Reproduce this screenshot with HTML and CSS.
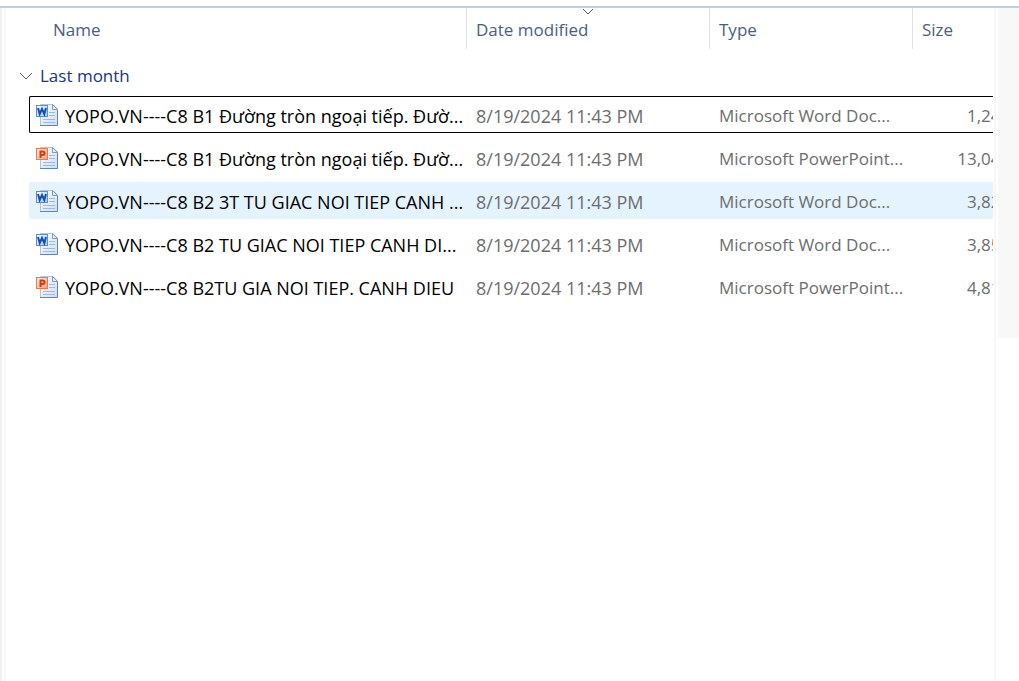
FILE: index.html
```html
<!DOCTYPE html>
<html lang="en">
<head>
<meta charset="utf-8">
<title>File list</title>
<link rel="stylesheet" href="styles.css">
</head>
<body>
<svg class="defs" aria-hidden="true">
  <defs>
    <linearGradient id="page" x1="0" y1="0" x2="1" y2="1">
      <stop offset="0" stop-color="#ffffff"/>
      <stop offset="1" stop-color="#cddcf5"/>
    </linearGradient>
    <linearGradient id="blue" x1="0" y1="0" x2="1" y2="1">
      <stop offset="0" stop-color="#ffffff"/>
      <stop offset="1" stop-color="#9cc8f2"/>
    </linearGradient>
    <linearGradient id="orange" x1="0" y1="0" x2="1" y2="1">
      <stop offset="0" stop-color="#fff0e8"/>
      <stop offset="1" stop-color="#f8a080"/>
    </linearGradient>
    <symbol id="sheet" viewBox="0 0 24 24">
      <path d="M5.500 1.500H18L22.500 6V22.500H5.500Z" fill="url(#page)" stroke="#b3c4de"/>
      <path d="M5 22.500H22.500V7" fill="none" stroke="#5f82c0"/>
      <path d="M17.500 1.500V6.500H22.500Z" fill="#e6eef8" stroke="#8199bb"/>
    </symbol>
    <symbol id="word" viewBox="0 0 24 24">
      <use href="#sheet"/>
      <path d="M14 9.500H20M14 12.500H20M8 16.500H20M8 19.500H20" stroke="#9db9e2"/>
      <rect x="1.500" y="2.500" width="11" height="11" fill="url(#blue)" stroke="#5b8fd0"/>
      <path d="M3 5L4.700 11L7 6L9.300 11L11 5" fill="none" stroke="#1750ac" stroke-width="2"/>
    </symbol>
    <symbol id="powerpoint" viewBox="0 0 24 24">
      <use href="#sheet"/>
      <path d="M14 9.500H20M14 12.500H20M8 16.500H20M8 19.500H20" stroke="#a4b9de"/>
      <rect x="1.500" y="2.500" width="11" height="11" fill="url(#orange)" stroke="#ea7a50"/>
      <path d="M5.500 12V5.500H7.500C10.300 5.500 10.300 9 7.500 9H5.500" fill="none" stroke="#d0400f" stroke-width="2"/>
    </symbol>
  </defs>
</svg>
<div class="window">
  <div class="nav-edge"></div>
  <main class="list">
    <table class="files">
      <colgroup><col class="col-name"><col class="col-date"><col class="col-type"><col class="col-size"></colgroup>
      <thead>
        <tr>
          <th class="head head-name" scope="col"><button class="sort" type="button">Name</button></th>
          <th class="head" scope="col" aria-sort="descending">
            <button class="sort" type="button">Date modified</button>
            <svg class="sort-mark" viewBox="0 0 12 7" aria-hidden="true"><path d="M1 1L6 6L11 1"/></svg>
          </th>
          <th class="head" scope="col"><button class="sort" type="button">Type</button></th>
          <th class="head" scope="col"><button class="sort" type="button">Size</button></th>
        </tr>
      </thead>
      <tbody>
        <tr>
          <th class="group" colspan="4" scope="rowgroup">
            <button class="toggle" type="button" aria-expanded="true"><svg class="chevron" viewBox="0 0 14 8" aria-hidden="true"><path d="M1 1L7 7L13 1"/></svg>Last month</button>
          </th>
        </tr>
        <tr class="file focused">
          <td><div class="name"><svg class="icon"><use href="#word"/></svg><span class="title">YOPO.VN----C8 B1 Đường tròn ngoại tiếp. Đườ...</span></div></td>
          <td class="date">8/19/2024 11:43 PM</td><td>Microsoft Word Doc...</td><td class="size">1,244 KB</td>
        </tr>
        <tr class="file">
          <td><div class="name"><svg class="icon"><use href="#powerpoint"/></svg><span class="title">YOPO.VN----C8 B1 Đường tròn ngoại tiếp. Đườ...</span></div></td>
          <td class="date">8/19/2024 11:43 PM</td><td>Microsoft PowerPoint...</td><td class="size">13,044 KB</td>
        </tr>
        <tr class="file hovered">
          <td><div class="name"><svg class="icon"><use href="#word"/></svg><span class="title">YOPO.VN----C8 B2 3T TU GIAC NOI TIEP CANH ...</span></div></td>
          <td class="date">8/19/2024 11:43 PM</td><td>Microsoft Word Doc...</td><td class="size">3,822 KB</td>
        </tr>
        <tr class="file">
          <td><div class="name"><svg class="icon"><use href="#word"/></svg><span class="title">YOPO.VN----C8 B2 TU GIAC NOI TIEP CANH DI...</span></div></td>
          <td class="date">8/19/2024 11:43 PM</td><td>Microsoft Word Doc...</td><td class="size">3,855 KB</td>
        </tr>
        <tr class="file">
          <td><div class="name"><svg class="icon"><use href="#powerpoint"/></svg><span class="title">YOPO.VN----C8 B2TU GIA NOI TIEP. CANH DIEU</span></div></td>
          <td class="date">8/19/2024 11:43 PM</td><td>Microsoft PowerPoint...</td><td class="size">4,811 KB</td>
        </tr>
      </tbody>
    </table>
  </main>
  <aside class="preview"><div class="preview-pane"></div></aside>
</div>
</body>
</html>
```
FILE: styles.css
```css
* { box-sizing: border-box; }

body {
  margin: 0;
  background: #fff;
  color: #6d6d6d;
  font: 17px/24px "Open Sans", "Noto Sans", sans-serif;
}

.defs { position: absolute; width: 0; height: 0; }

.window {
  display: flex;
  min-height: 100vh;
  padding-top: 8px;
  background: linear-gradient(#bccddb, #bccddb) 0 6px / 100% 2px no-repeat;
}

.nav-edge {
  flex: none;
  width: 6px;
  border-left: 2px solid #f0f0f0;
  border-right: 2px solid #f7f7f7;
}

.list {
  flex: 1;
  min-width: 0;
  padding-left: 23px;
  overflow: hidden;
}

.files {
  width: 1017px;
  margin-top: -6px;
  table-layout: fixed;
  border-collapse: separate;
  border-spacing: 0 6px;
}

.col-name { width: 437px; }
.col-date { width: 243px; }
.col-type { width: 203px; }
.col-size { width: 134px; }

button {
  padding: 0;
  border: 0;
  background: none;
  font: inherit;
  color: inherit;
}

.head {
  position: relative;
  height: 41px;
  padding: 2px 9px 0;
  border-left: 1px solid #e2e2e2;
  color: #4c607a;
  font-weight: 400;
  text-align: left;
}

.head-name { padding-left: 24px; border-left: 0; }

.sort-mark {
  position: absolute;
  top: 0;
  left: calc(50% - 6px);
  width: 12px;
  height: 7px;
  fill: none;
  stroke: #555;
}

.group {
  height: 35px;
  padding: 6px 0 0;
  color: #1e3287;
  font-weight: 400;
  text-align: left;
}

.toggle {
  display: flex;
  align-items: center;
  gap: 7px;
  margin-left: -10px;
}

.chevron { width: 14px; height: 8px; fill: none; stroke: #606060; }

.file td {
  height: 37px;
  padding: 3px 10px 0;
  border: 1px solid transparent;
  border-width: 1px 0;
  white-space: nowrap;
}

.file td:first-child {
  padding: 0 0 0 5px;
  border-left-width: 1px;
  border-radius: 2px 0 0 2px;
  color: #000;
}

.file .date { font-size: 18px; }
.file .size { text-align: right; }

.focused td { border-color: #000; }
.hovered td { border-color: #e5f3ff; background: #e5f3ff; }

.name { display: flex; align-items: center; gap: 6px; }
.icon { flex: none; width: 24px; height: 24px; }
.title { padding-top: 3px; font-size: 18px; }

.preview {
  flex: none;
  width: 26px;
  padding-left: 5px;
  background: linear-gradient(#f7f7f7, #f7f7f7) 1px 0 / 2px 100% no-repeat;
}

.preview-pane {
  height: 330px;
  background: #f8f8f8;
}
```
